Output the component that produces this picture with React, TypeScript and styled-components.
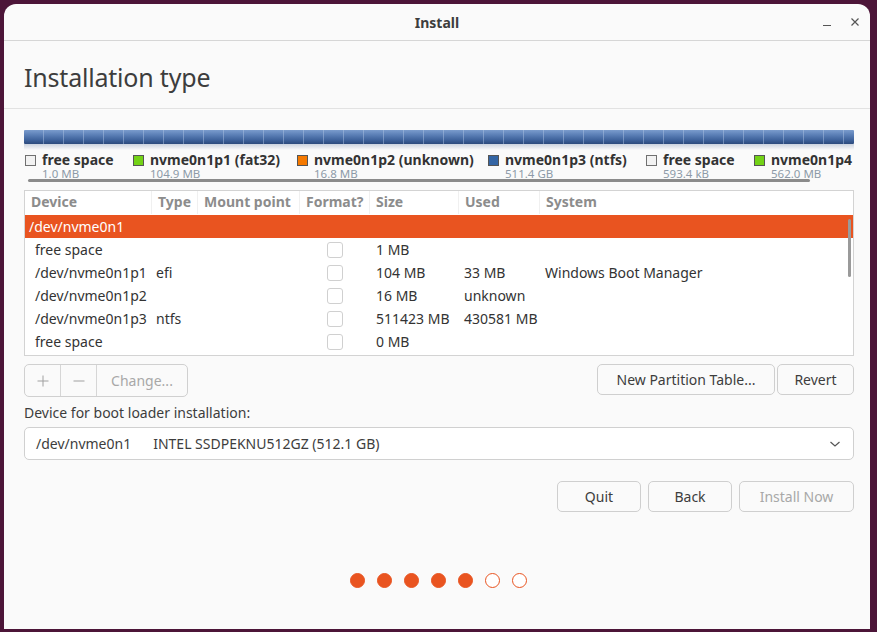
import React from "react";
import styled, { createGlobalStyle } from "styled-components";

const Global = createGlobalStyle`
  html, body { margin: 0; padding: 0; }
  body {
    background: #4c1538;
    font-family: "Noto Sans", "Open Sans", sans-serif;
    color: #3d3d3d;
    width: 877px;
    height: 632px;
    overflow: hidden;
  }
`;

const Desktop = styled.div`
  width: 877px;
  height: 632px;
  padding: 4px 7px 3px 4px;
  box-sizing: border-box;
  display: flex;
`;

const Window = styled.div`
  flex: 1;
  background: #fafafa;
  border-radius: 12px 12px 0 0;
  display: flex;
  flex-direction: column;
  overflow: hidden;
`;

const TitleBar = styled.div`
  height: 36px;
  flex: 0 0 36px;
  border-bottom: 1px solid #d6d6d6;
  display: grid;
  grid-template-columns: 1fr auto 1fr;
  align-items: center;
`;

const Title = styled.div`
  grid-column: 2;
  font-weight: 700;
  font-size: 14px;
  color: #3d3d3d;
`;

const WinControls = styled.div`
  grid-column: 3;
  justify-self: end;
  display: flex;
  gap: 18px;
  padding-right: 10px;
  align-items: center;
`;

const Header = styled.div`
  height: 67px;
  border-bottom: 1px solid #e2e2e2;
  display: flex;
  align-items: center;
  padding-left: 20px;
`;

const Heading = styled.h1`
  margin: 0;
  font-size: 25px;
  font-weight: 400;
  color: #3d3d3d;
  letter-spacing: -0.2px;
  padding-top: 4px;
`;

const Body = styled.div`
  padding: 21px 16px 0 20px;
  display: flex;
  flex-direction: column;
`;

const Bar = styled.div`
  height: 14px;
  border-radius: 1px;
  background:
    repeating-linear-gradient(90deg, transparent 0, transparent 19px, rgba(180, 200, 230, 0.45) 19px, rgba(180, 200, 230, 0.45) 20px),
    linear-gradient(#7b9ccd 0%, #5b7fb6 35%, #3f639c 70%, #2c4a7c 100%);
  position: relative;
  &::after {
    content: "";
    position: absolute;
    left: 0;
    right: 0;
    top: 14px;
    height: 6px;
    background: linear-gradient(rgba(60, 90, 140, 0.25), rgba(60, 90, 140, 0));
  }
`;

const LegendWrap = styled.div`
  position: relative;
  height: 46px;
  overflow: hidden;
`;

const Legend = styled.div`
  display: flex;
  padding-top: 8px;
  white-space: nowrap;
`;

const LegendItem = styled.div<{ $w: number }>`
  flex: 0 0 ${(p) => p.$w}px;
  display: grid;
  grid-template-columns: 18px auto;
  grid-template-rows: 15px 14px;
`;

const Swatch = styled.span<{ $c: string }>`
  width: 9px;
  height: 9px;
  margin: 3px 0 0 1px;
  background: ${(p) => p.$c};
  border: 1px solid ${(p) => (p.$c === "#f2f2f2" ? "#707070" : "#555")};
`;

const LegendName = styled.span`
  font-weight: 700;
  font-size: 14px;
  line-height: 15px;
  color: #333;
`;

const LegendSize = styled.span`
  grid-column: 2;
  font-size: 11.5px;
  line-height: 14px;
  color: #8d9aa8;
`;

const HScroll = styled.div`
  position: absolute;
  left: 4px;
  width: 782px;
  top: 35px;
  height: 3px;
  background: #8b8b8b;
  border-radius: 2px;
`;

const TableBox = styled.div`
  border: 1px solid #d3d3d3;
  background: #fff;
  height: 164px;
  position: relative;
  overflow: hidden;
`;

const Row = styled.div<{ $sel?: boolean; $head?: boolean }>`
  display: grid;
  grid-template-columns: 127px 46px 102px 70px 89px 81px 1fr;
  height: 23px;
  align-items: center;
  background: ${(p) => (p.$sel ? "#e95420" : "transparent")};
  color: ${(p) => (p.$sel ? "#fff" : "#333")};
  font-size: 14px;
  margin-bottom: ${(p) => (p.$head ? 1 : 0)}px;
`;

const HeadCell = styled.div<{ $sep?: boolean }>`
  font-weight: 700;
  color: #8c8c8c;
  font-size: 14px;
  padding-left: 6px;
  height: 23px;
  line-height: 22px;
  border-right: ${(p) => (p.$sep ? "1px solid #f0f0f0" : "none")};
  white-space: nowrap;
  overflow: hidden;
`;

const Cell = styled.div<{ $pad?: number }>`
  padding-left: ${(p) => p.$pad ?? 6}px;
  white-space: nowrap;
`;

const DeviceCell = styled.div<{ $span?: boolean }>`
  grid-column: ${(p) => (p.$span ? "1 / -1" : "auto")};
  padding-left: ${(p) => (p.$span ? 4 : 10)}px;
  white-space: nowrap;
`;

const CheckCell = styled.div`
  display: flex;
  justify-content: center;
`;

const Check = styled.span`
  width: 14px;
  height: 14px;
  border: 1px solid #d0d0d0;
  border-radius: 3px;
  background: #fff;
`;

const VScroll = styled.div`
  position: absolute;
  right: 2px;
  top: 28px;
  width: 3px;
  height: 58px;
  background: #9a9a9a;
  border-radius: 2px;
`;

const ToolRow = styled.div`
  display: flex;
  justify-content: space-between;
  margin-top: 8px;
`;

const BtnGroup = styled.div`
  display: flex;
  border: 1px solid #d0d0d0;
  border-radius: 5px;
  height: 31px;
  overflow: hidden;
  background: #fafafa;
`;

const GroupBtn = styled.div<{ $w: number; $last?: boolean }>`
  width: ${(p) => p.$w}px;
  display: flex;
  align-items: center;
  justify-content: center;
  color: #a8a8a8;
  font-size: 14px;
  border-right: ${(p) => (p.$last ? "none" : "1px solid #d6d6d6")};
`;

const RightBtns = styled.div`
  display: flex;
  gap: 2px;
`;

const Button = styled.div<{ $w: number; $disabled?: boolean }>`
  width: ${(p) => p.$w}px;
  height: 31px;
  box-sizing: border-box;
  border: 1px solid #cfcfcf;
  border-radius: 5px;
  background: #fafafa;
  display: flex;
  align-items: center;
  justify-content: center;
  font-size: 14px;
  color: ${(p) => (p.$disabled ? "#a8a8a8" : "#3d3d3d")};
`;

const Label = styled.div`
  margin-top: 6px;
  font-size: 14px;
  color: #3d3d3d;
  height: 20px;
  line-height: 20px;
`;

const Combo = styled.div`
  margin-top: 4px;
  height: 33px;
  box-sizing: border-box;
  border: 1px solid #d0d0d0;
  border-radius: 5px;
  background: #fff;
  display: flex;
  align-items: center;
  padding: 0 12px 0 11px;
  font-size: 14px;
  color: #3d3d3d;
  gap: 22px;
`;

const ComboArrow = styled.span`
  margin-left: auto;
  display: flex;
`;

const Footer = styled.div`
  display: flex;
  justify-content: flex-end;
  gap: 7px;
  margin-top: 21px;
`;

const Dots = styled.div`
  display: flex;
  justify-content: center;
  gap: 12px;
  margin-top: 61px;
  padding-right: 1px;
`;

const Dot = styled.span<{ $on: boolean }>`
  width: 15px;
  height: 15px;
  box-sizing: border-box;
  border-radius: 50%;
  background: ${(p) => (p.$on ? "#e95420" : "#fff")};
  border: 1.3px solid #e95420;
`;

const legend = [
  { c: "#f2f2f2", n: "free space", s: "1.0 MB", w: 108 },
  { c: "#73d216", n: "nvme0n1p1 (fat32)", s: "104.9 MB", w: 164 },
  { c: "#f57900", n: "nvme0n1p2 (unknown)", s: "16.8 MB", w: 191 },
  { c: "#3465a4", n: "nvme0n1p3 (ntfs)", s: "511.4 GB", w: 158 },
  { c: "#f2f2f2", n: "free space", s: "593.4 kB", w: 108 },
  { c: "#73d216", n: "nvme0n1p4", s: "562.0 MB", w: 120 },
];

const rows = [
  { d: "free space", t: "", s: "1 MB", u: "", sys: "" },
  { d: "/dev/nvme0n1p1", t: "efi", s: "104 MB", u: "33 MB", sys: "Windows Boot Manager" },
  { d: "/dev/nvme0n1p2", t: "", s: "16 MB", u: "unknown", sys: "" },
  { d: "/dev/nvme0n1p3", t: "ntfs", s: "511423 MB", u: "430581 MB", sys: "" },
  { d: "free space", t: "", s: "0 MB", u: "", sys: "" },
];

export default function App() {
  return (
    <>
      <Global />
      <Desktop>
        <Window>
          <TitleBar>
            <Title>Install</Title>
            <WinControls>
              <svg width="10" height="10" viewBox="0 0 10 10">
                <line x1="1" y1="8.5" x2="9" y2="8.5" stroke="#555" strokeWidth="1.2" />
              </svg>
              <svg width="10" height="10" viewBox="0 0 10 10">
                <path d="M1.5 1.5 L8.5 8.5 M8.5 1.5 L1.5 8.5" stroke="#555" strokeWidth="1.2" />
              </svg>
            </WinControls>
          </TitleBar>
          <Header>
            <Heading>Installation type</Heading>
          </Header>
          <Body>
            <Bar />
            <LegendWrap>
              <Legend>
                {legend.map((l, i) => (
                  <LegendItem key={i} $w={l.w}>
                    <Swatch $c={l.c} />
                    <LegendName>{l.n}</LegendName>
                    <LegendSize>{l.s}</LegendSize>
                  </LegendItem>
                ))}
              </Legend>
              <HScroll />
            </LegendWrap>
            <TableBox>
              <Row $head>
                <HeadCell $sep>Device</HeadCell>
                <HeadCell $sep>Type</HeadCell>
                <HeadCell $sep>Mount point</HeadCell>
                <HeadCell $sep>Format?</HeadCell>
                <HeadCell $sep>Size</HeadCell>
                <HeadCell $sep>Used</HeadCell>
                <HeadCell>System</HeadCell>
              </Row>
              <Row $sel>
                <DeviceCell $span>/dev/nvme0n1</DeviceCell>
              </Row>
              {rows.map((r, i) => (
                <Row key={i}>
                  <DeviceCell>{r.d}</DeviceCell>
                  <Cell $pad={4}>{r.t}</Cell>
                  <Cell />
                  <CheckCell>
                    <Check />
                  </CheckCell>
                  <Cell>{r.s}</Cell>
                  <Cell $pad={5}>{r.u}</Cell>
                  <Cell $pad={5}>{r.sys}</Cell>
                </Row>
              ))}
              <VScroll />
            </TableBox>
            <ToolRow>
              <BtnGroup>
                <GroupBtn $w={35}>
                  <svg width="12" height="12" viewBox="0 0 12 12">
                    <path d="M6 0.5 V11.5 M0.5 6 H11.5" stroke="#a0a0a0" strokeWidth="1" />
                  </svg>
                </GroupBtn>
                <GroupBtn $w={35}>
                  <svg width="12" height="12" viewBox="0 0 12 12">
                    <path d="M0.5 6 H11.5" stroke="#a0a0a0" strokeWidth="1" />
                  </svg>
                </GroupBtn>
                <GroupBtn $w={90} $last>
                  Change...
                </GroupBtn>
              </BtnGroup>
              <RightBtns>
                <Button $w={178}>New Partition Table...</Button>
                <Button $w={77}>Revert</Button>
              </RightBtns>
            </ToolRow>
            <Label>Device for boot loader installation:</Label>
            <Combo>
              <span>/dev/nvme0n1</span>
              <span>INTEL SSDPEKNU512GZ (512.1 GB)</span>
              <ComboArrow>
                <svg width="12" height="8" viewBox="0 0 12 8">
                  <path d="M1.5 2 L6 6 L10.5 2" fill="none" stroke="#555" strokeWidth="1.2" />
                </svg>
              </ComboArrow>
            </Combo>
            <Footer>
              <Button $w={84}>Quit</Button>
              <Button $w={84}>Back</Button>
              <Button $w={115} $disabled>
                Install Now
              </Button>
            </Footer>
            <Dots>
              {[1, 1, 1, 1, 1, 0, 0].map((on, i) => (
                <Dot key={i} $on={!!on} />
              ))}
            </Dots>
          </Body>
        </Window>
      </Desktop>
    </>
  );
}
